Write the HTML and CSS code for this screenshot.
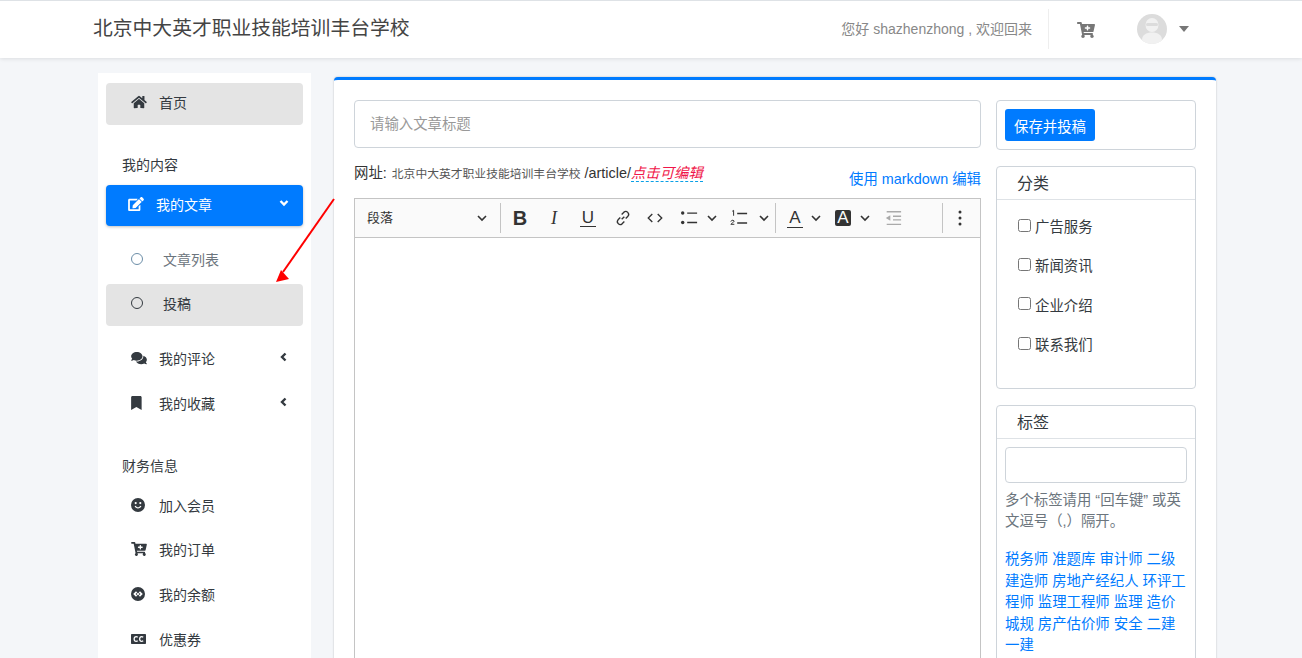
FILE: index.html
```html
<!DOCTYPE html>
<html lang="zh-CN">
<head>
    <meta charset="UTF-8">
    <meta name="viewport" content="width=device-width, initial-scale=1.0">
    <title>投稿</title>
    <link rel="stylesheet" href="styles.css">
</head>
<body>

    <header class="topbar">
        <h1 class="site-name">北京中大英才职业技能培训丰台学校</h1>
        <div class="topbar-right">
            <span class="welcome">您好 shazhenzhong , 欢迎回来</span>
            <span class="topbar-line"></span>
            <svg class="top-cart" viewBox="0 0 576 512"><path d="M504.717 320H211.572l6.545 32h268.418c15.401 0 26.816 14.301 23.403 29.319l-5.517 24.276C523.112 414.668 536 433.828 536 456c0 31.202-25.519 56.444-56.824 55.994-29.823-.429-54.35-24.631-55.155-54.447-.44-16.287 6.085-31.049 16.803-41.548H231.176C241.553 426.165 248 440.326 248 456c0 31.813-26.528 57.431-58.67 55.938-28.54-1.325-51.751-24.385-53.251-52.917-1.158-22.034 10.436-41.455 28.051-51.586L93.883 64H24C10.745 64 0 53.255 0 40V24C0 10.745 10.745 0 24 0h102.529c11.401 0 21.228 8.021 23.513 19.19L159.208 64H551.99c15.401 0 26.816 14.301 23.403 29.319l-47.273 208C525.637 312.246 515.923 320 504.717 320zM408 168h-48v-40c0-8.837-7.163-16-16-16h-16c-8.837 0-16 7.163-16 16v40h-48c-8.837 0-16 7.163-16 16v16c0 8.837 7.163 16 16 16h48v40c0 8.837 7.163 16 16 16h16c8.837 0 16-7.163 16-16v-40h48c8.837 0 16-7.163 16-16v-16c0-8.837-7.163-16-16-16z"/></svg>
            <svg class="avatar" viewBox="0 0 30 30">
                <circle cx="15" cy="15" r="15" fill="#dcdcdc"/>
                <ellipse cx="15" cy="11" rx="6.5" ry="7" fill="#f1f1f1"/>
                <rect x="9" y="9" width="12" height="3" rx="1.5" fill="#dcdcdc"/>
                <path d="M5 26c0-5 4-7.500 10-7.500s10 2.500 10 7.500c-2.500 2.500-6 4-10 4s-7.500-1.500-10-4z" fill="#f1f1f1"/>
            </svg>
            <span class="caret"></span>
        </div>
    </header>

    <div class="wrapper">
        <aside class="sidebar">
            <a class="nav-item hover">
                <svg class="nav-icon" viewBox="0 0 576 512"><path d="M280.37 148.26L96 300.11V464a16 16 0 0 0 16 16l112.06-.29a16 16 0 0 0 15.92-16V368a16 16 0 0 1 16-16h64a16 16 0 0 1 16 16v95.64a16 16 0 0 0 16 16.05L464 480a16 16 0 0 0 16-16V300L295.67 148.26a12.19 12.19 0 0 0-15.3 0zM571.6 251.47L488 182.56V44.05a12 12 0 0 0-12-12h-56a12 12 0 0 0-12 12v72.61L318.47 43a48 48 0 0 0-61 0L4.34 251.47a12 12 0 0 0-1.6 16.9l25.5 31A12 12 0 0 0 45.15 301l235.22-193.74a12.19 12.19 0 0 1 15.3 0L530.9 301a12 12 0 0 0 16.9-1.6l25.5-31a12 12 0 0 0-1.7-16.93z"/></svg>
                <span>首页</span>
            </a>

            <div class="nav-title">我的内容</div>
            <a class="nav-item active">
                <svg class="nav-icon" viewBox="0 0 576 512"><path d="M402.6 83.2l90.2 90.2c3.8 3.8 3.8 10 0 13.8L274.4 405.6l-92.8 10.3c-12.4 1.400-22.9-9.100-21.500-21.500l10.300-92.800L388.800 83.200c3.800-3.800 10-3.800 13.800 0zm162-22.900l-48.800-48.800c-15.200-15.200-39.900-15.200-55.200 0l-35.400 35.400c-3.800 3.800-3.800 10 0 13.800l90.200 90.200c3.800 3.800 10 3.800 13.800 0l35.400-35.400c15.200-15.300 15.200-40 0-55.200zM384 346.200V448H64V128h229.800c3.200 0 6.200-1.300 8.500-3.500l40-40c7.600-7.600 2.200-20.500-8.500-20.500H48C21.500 64 0 85.500 0 112v352c0 26.500 21.500 48 48 48h352c26.500 0 48-21.500 48-48V306.200c0-10.700-12.900-16-20.500-8.500l-40 40c-2.200 2.300-3.500 5.300-3.500 8.500z"/></svg>
                <span>我的文章</span>
                <svg class="chev" viewBox="0 0 10 10"><path d="M1.500 3l3.500 3.500L8.500 3"/></svg>
            </a>
            <div class="subnav">
                <a class="nav-item sub muted"><i class="ring"></i><span>文章列表</span></a>
                <a class="nav-item sub hover"><i class="ring"></i><span>投稿</span></a>
            </div>
            <a class="nav-item">
                <svg class="nav-icon" viewBox="0 0 576 512"><path d="M416 192c0-88.400-93.100-160-208-160S0 103.600 0 192c0 34.300 14.100 65.900 38 92-13.400 30.200-35.500 54.200-35.800 54.500-2.200 2.300-2.800 5.700-1.500 8.700S4.800 352 8 352c36.600 0 66.900-12.300 88.700-25 32.200 15.700 70.300 25 111.300 25 114.900 0 208-71.600 208-160zm122 220c23.900-26 38-57.700 38-92 0-66.900-53.500-124.200-129.300-148.100.9 6.600 1.300 13.300 1.300 20.100 0 105.900-107.700 192-240 192-10.800 0-21.300-.8-31.700-1.900C207.800 439.600 281.800 480 368 480c41 0 79.100-9.200 111.300-25 21.800 12.700 52.100 25 88.700 25 3.200 0 6.100-1.900 7.300-4.800 1.300-2.900.7-6.300-1.500-8.700-.3-.3-22.400-24.200-35.800-54.500z"/></svg>
                <span>我的评论</span>
                <svg class="chev" viewBox="0 0 10 10"><path d="M6.500 1.500L3 5l3.500 3.500"/></svg>
            </a>
            <a class="nav-item">
                <svg class="nav-icon" viewBox="0 0 576 512"><path d="M0 512V48C0 21.490 21.490 0 48 0h288c26.510 0 48 21.490 48 48v464L192 400 0 512z"/></svg>
                <span>我的收藏</span>
                <svg class="chev" viewBox="0 0 10 10"><path d="M6.500 1.500L3 5l3.500 3.500"/></svg>
            </a>

            <div class="nav-title money">财务信息</div>
            <a class="nav-item">
                <svg class="nav-icon" viewBox="1 1 16 14"><path fill-rule="evenodd" d="M8 1a7 7 0 1 1 0 14A7 7 0 0 1 8 1zM5.700 5a1.100 1.100 0 1 0 0 2.200 1.100 1.100 0 0 0 0-2.200zm4.600 0a1.100 1.100 0 1 0 0 2.200 1.100 1.100 0 0 0 0-2.200zM4.600 9.300c.7 1.300 2 2.100 3.400 2.100s2.700-.8 3.400-2.100l-1-.5c-.5.900-1.400 1.500-2.400 1.500s-1.900-.6-2.400-1.500z"/></svg>
                <span>加入会员</span>
            </a>
            <a class="nav-item">
                <svg class="nav-icon" viewBox="0 0 576 512"><path d="M504.717 320H211.572l6.545 32h268.418c15.401 0 26.816 14.301 23.403 29.319l-5.517 24.276C523.112 414.668 536 433.828 536 456c0 31.202-25.519 56.444-56.824 55.994-29.823-.429-54.350-24.631-55.155-54.447-.44-16.287 6.085-31.049 16.803-41.548H231.176C241.553 426.165 248 440.326 248 456c0 31.813-26.528 57.431-58.670 55.938-28.540-1.325-51.751-24.385-53.251-52.917-1.158-22.034 10.436-41.455 28.051-51.586L93.883 64H24C10.745 64 0 53.255 0 40V24C0 10.745 10.745 0 24 0h102.529c11.401 0 21.228 8.021 23.513 19.190L159.208 64H551.990c15.401 0 26.816 14.301 23.403 29.319l-47.273 208C525.637 312.246 515.923 320 504.717 320zM408 168h-48v-40c0-8.837-7.163-16-16-16h-16c-8.837 0-16 7.163-16 16v40h-48c-8.837 0-16 7.163-16 16v16c0 8.837 7.163 16 16 16h48v40c0 8.837 7.163 16 16 16h16c8.837 0 16-7.163 16-16v-40h48c8.837 0 16-7.163 16-16v-16c0-8.837-7.163-16-16-16z"/></svg>
                <span>我的订单</span>
            </a>
            <a class="nav-item">
                <svg class="nav-icon" viewBox="1 1 16 14"><path fill-rule="evenodd" d="M8 1a7 7 0 1 1 0 14A7 7 0 0 1 8 1zM3.200 8L6 10.800 7.200 9.600 5.600 8 7.200 6.400 6 5.200zm9.600 0L10 5.200 8.800 6.400 10.400 8 8.800 9.600 10 10.800zM8 6.600L6.600 8 8 9.400 9.400 8z"/></svg>
                <span>我的余额</span>
            </a>
            <a class="nav-item">
                <svg class="nav-icon" viewBox="0.5 1 16 14"><path fill-rule="evenodd" d="M1.500 3h13c.6 0 1 .4 1 1v8c0 .6-.4 1-1 1h-13c-.6 0-1-.4-1-1V4c0-.6.400-1 1-1zM6.800 6.700l.8-.9C7 5.200 6.300 5 5.600 5 4.100 5 3 6.200 3 8s1.100 3 2.600 3c.7 0 1.400-.3 2-.8l-.8-.9c-.3.3-.7.5-1.100.5-.8 0-1.400-.7-1.400-1.800s.6-1.800 1.400-1.800c.3 0 .7.200 1.100.5zm5.500 0l.8-.9c-.6-.6-1.300-.8-2-.8C9.600 5 8.500 6.200 8.500 8s1.100 3 2.600 3c.7 0 1.400-.3 2-.8l-.8-.9c-.3.3-.7.5-1.100.5-.8 0-1.400-.7-1.400-1.800s.6-1.800 1.400-1.800c.3 0 .7.200 1.100.5z"/></svg>
                <span>优惠券</span>
            </a>
        </aside>

        <main class="card">
            <div class="editor-col">
                <div class="title-input">请输入文章标题</div>
                <div class="url-row">
                    <div class="url">
                        <span class="url-label">网址:</span>
                        <span class="url-site">北京中大英才职业技能培训丰台学校</span>
                        <span>/article/</span><em class="url-edit">点击可编辑</em>
                    </div>
                    <a class="md-link">使用 markdown 编辑</a>
                </div>

                <div class="toolbar">
                    <div class="tb-format"><span>段落</span><svg class="tb-arrow" viewBox="0 0 10 10"><path d="M1 3l4 4 4-4"/></svg></div>
                    <i class="tb-sep"></i>
                    <span class="tb-btn tb-b">B</span>
                    <span class="tb-btn tb-i">I</span>
                    <span class="tb-btn tb-u">U</span>
                    <svg class="tb-icon tb-link" viewBox="0 0 20 20"><path d="M8.500 11.500l3-3M7 9.500l-2.500 2.500a3.200 3.200 0 0 0 4.500 4.500L11.500 14M8.500 6L11 3.500A3.200 3.200 0 0 1 15.500 8L13 10.500"/></svg>
                    <svg class="tb-icon" viewBox="0 0 20 20"><path d="M7 5.500L2.500 10 7 14.500M13 5.500l4.500 4.500-4.500 4.500"/></svg>
                    <svg class="tb-icon wide" viewBox="0 0 20 20"><circle class="solid" cx="3" cy="4.500" r="1.900"/><circle class="solid" cx="3" cy="15" r="1.900"/><path d="M8 4.500h11M8 15h11"/></svg>
                    <svg class="tb-arrow list" viewBox="0 0 10 10"><path d="M1 3l4 4 4-4"/></svg>
                    <svg class="tb-icon wide tb-num" viewBox="0 0 20 20"><path d="M8 5h11M8 15.500h11"/><path class="thin" d="M2.500 2.500l1.500-1v6M1 14c.3-2 3.500-2 3.500-.3 0 1-2.800 1.800-3.500 3.300h3.800"/></svg>
                    <svg class="tb-arrow end" viewBox="0 0 10 10"><path d="M1 3l4 4 4-4"/></svg>
                    <i class="tb-sep"></i>
                    <span class="tb-btn tb-color">A</span>
                    <svg class="tb-arrow" viewBox="0 0 10 10"><path d="M1 3l4 4 4-4"/></svg>
                    <span class="tb-btn tb-bg">A</span>
                    <svg class="tb-arrow" viewBox="0 0 10 10"><path d="M1 3l4 4 4-4"/></svg>
                    <svg class="tb-icon off" viewBox="0 0 20 20"><path d="M3 3h16M10 8h9M10 12h9M3 17h16"/><path class="solid" d="M7 7v6l-5-3z"/></svg>
                    <i class="tb-sep last"></i>
                    <svg class="tb-more" viewBox="0 0 4 16"><circle cx="2" cy="2" r="1.500"/><circle cx="2" cy="8" r="1.500"/><circle cx="2" cy="14" r="1.500"/></svg>
                </div>
                <div class="editor-body"></div>
            </div>

            <div class="side-col">
                <div class="panel save-panel"><button class="save-btn">保存并投稿</button></div>

                <div class="panel">
                    <div class="panel-head">分类</div>
                    <div class="cats">
                        <label class="cat"><input type="checkbox"><span>广告服务</span></label>
                        <label class="cat"><input type="checkbox"><span>新闻资讯</span></label>
                        <label class="cat"><input type="checkbox"><span>企业介绍</span></label>
                        <label class="cat"><input type="checkbox"><span>联系我们</span></label>
                    </div>
                </div>

                <div class="panel">
                    <div class="panel-head">标签</div>
                    <div class="tags-body">
                        <div class="tag-input"></div>
                        <p class="tag-help">多个标签请用 “回车键” 或英文逗号（,）隔开。</p>
                        <p class="tag-list">
                            <a>税务师</a> <a>准题库</a> <a>审计师</a> <a>二级建造师</a> <a>房地产经纪人</a> <a>环评工程师</a> <a>监理工程师</a> <a>监理</a> <a>造价</a> <a>城规</a> <a>房产估价师</a> <a>安全</a> <a>二建</a> <a>一建</a>
                        </p>
                    </div>
                </div>
            </div>
        </main>
    </div>

    <svg class="red-arrow" width="70" height="95" viewBox="0 0 70 95">
        <path d="M63 5L12 78" stroke="#f00" stroke-width="2" fill="none"/>
        <path d="M5 88l5-12 8 9z" fill="#f00"/>
    </svg>

</body>
</html>
```

FILE: styles.css
```css
* {
    margin: 0;
    padding: 0;
    box-sizing: border-box;
}

html, body {
    height: 100%;
    overflow: hidden;
}

body {
    position: relative;
    background-color: #f4f6f9;
    color: #343a40;
    font-family: "Liberation Sans", "Noto Sans CJK SC", sans-serif;
    font-size: 14px;
}

/* top bar */
.topbar {
    height: 58px;
    padding: 0 113px 1px 93px;
    display: flex;
    justify-content: space-between;
    align-items: center;
    background-color: #fff;
    border-top: 1px solid #dee2e6;
    box-shadow: 0 1px 4px rgba(0, 0, 0, 0.1);
}

.site-name {
    margin-bottom: 6px;
    font-size: 19.8px;
    font-weight: 400;
    color: #444;
}

.topbar-right {
    display: flex;
    align-items: center;
}

.welcome {
    margin-top: -2px;
    font-size: 14px;
    color: #888;
}

.topbar-line {
    width: 1px;
    height: 40px;
    margin: 0 28px 0 16px;
    background-color: #eee;
}

.top-cart {
    width: 18px;
    height: 16px;
    margin-top: 2px;
    fill: #777;
}

.avatar {
    width: 30px;
    height: 30px;
    margin-left: 42px;
}

.caret {
    margin-left: 12px;
    border-top: 6px solid #777;
    border-left: 5px solid transparent;
    border-right: 5px solid transparent;
}

/* page columns */
.wrapper {
    display: flex;
    align-items: flex-start;
    gap: 23px;
    padding: 15px 0 0 98px;
}

.sidebar {
    width: 213px;
    padding: 10px 8px 0;
    background-color: #fff;
}

.nav-item {
    height: 42px;
    margin-bottom: 3px;
    padding: 0 0 4px 25px;
    display: flex;
    align-items: center;
    gap: 12px;
    border-radius: 4px;
    color: #343a40;
}

.nav-item.hover {
    background-color: #e4e4e4;
}

.nav-item.active {
    height: 41px;
    margin-bottom: 4px;
    padding: 0 0 3px 22px;
    background-color: #007bff;
    color: #fff;
    box-shadow: 0 1px 3px rgba(0, 0, 0, 0.25);
}

.nav-icon {
    width: 16px;
    height: 14px;
    fill: currentColor;
    flex-shrink: 0;
}

.chev {
    width: 10px;
    height: 10px;
    margin: -2px 14px 0 auto;
    fill: none;
    stroke: currentColor;
    stroke-width: 2.4;
}

.nav-title {
    height: 57px;
    padding: 27px 16px 0;
    line-height: 21px;
}

.money + .nav-item {
    margin-bottom: 2px;
}

.subnav {
    margin: 13px 0 13px;
}

.nav-item.sub {
    gap: 20px;
}

.nav-item.muted {
    padding-bottom: 2px;
    color: #6c757d;
}

.ring {
    width: 12px;
    height: 12px;
    border: 1.5px solid #343a40;
    border-radius: 50%;
}

.muted .ring {
    border-color: #6c8ea8;
}

/* main card */
.card {
    width: 882px;
    height: 640px;
    margin-top: 4px;
    padding: 20px;
    display: flex;
    gap: 15px;
    background-color: #fff;
    border-top: 3px solid #007bff;
    border-radius: 4px;
    box-shadow: 0 0 2px rgba(0, 0, 0, 0.25);
    font-size: 14.4px;
}

.editor-col {
    width: 627px;
}

.title-input {
    height: 48px;
    padding: 0 15px;
    line-height: 46px;
    border: 1px solid #ced4da;
    border-radius: 4px;
    color: #999;
}

.url-row {
    height: 50px;
    padding-top: 15px;
    display: flex;
    justify-content: space-between;
}

.url {
    line-height: 21px;
    color: #333;
}

.url-label {
    margin-right: 1px;
}

.url-site {
    font-size: 11.8px;
    color: #555;
}

.url-edit {
    color: #f0164a;
    border-bottom: 1px dashed #0aa0e6;
}

.md-link {
    align-self: flex-end;
    margin-bottom: 10px;
    color: #007bff;
}

/* ckeditor-like toolbar */
.toolbar {
    height: 40px;
    padding-left: 12px;
    display: flex;
    align-items: center;
    background-color: #fafafa;
    border: 1px solid #c4c4c4;
    color: #333;
}

.tb-format {
    width: 122px;
    padding-right: 2px;
    display: flex;
    justify-content: space-between;
    align-items: center;
    font-size: 13px;
}

.tb-format span {
    margin-top: -4px;
}

.tb-sep {
    width: 1px;
    height: 30px;
    margin: 0 11px;
    background-color: #c4c4c4;
}

.tb-sep.last {
    margin: 0 15px 0 40px;
}

.tb-btn {
    width: 16px;
    margin-right: 18px;
    text-align: center;
    line-height: 20px;
}

.tb-b {
    font-size: 20px;
    font-weight: 700;
}

.tb-i {
    font-size: 18px;
    font-style: italic;
    font-family: "Liberation Serif", serif;
}

.tb-u {
    font-size: 17px;
    border-bottom: 1.5px solid #333;
    line-height: 17px;
}

.tb-icon {
    width: 18px;
    height: 18px;
    margin-right: 16px;
    fill: none;
    stroke: #333;
    stroke-width: 1.5;
    flex-shrink: 0;
}

.tb-link {
    margin-right: 14px;
}

.tb-icon.wide {
    margin-right: 9px;
}

.tb-icon.tb-num {
    margin-right: 11px;
}

.tb-icon .solid {
    fill: #333;
    stroke: none;
}

.tb-icon .thin {
    stroke-width: 1.1;
}

.tb-icon.off {
    margin: 0 0 0 4px;
    stroke: #aaa;
}

.tb-icon.off .solid {
    fill: #aaa;
}

.tb-arrow {
    width: 10px;
    height: 10px;
    margin-right: 10px;
    fill: none;
    stroke: #333;
    stroke-width: 1.6;
    flex-shrink: 0;
}

.tb-arrow.list {
    margin-right: 13px;
}

.tb-arrow.end {
    margin-right: -5px;
}

.tb-format .tb-arrow {
    margin-right: 0;
}

.tb-color,
.tb-bg {
    font-size: 17px;
    margin-right: 8px;
}

.tb-color {
    border-bottom: 1.5px solid #333;
    line-height: 19px;
}

.tb-bg {
    height: 16px;
    margin: 0 9px 0 4px;
    line-height: 16px;
    background-color: #333;
    color: #fafafa;
    border-radius: 2px;
}

.tb-more {
    width: 4px;
    height: 16px;
    fill: #333;
}

.editor-body {
    height: 430px;
    background-color: #fff;
    border: 1px solid #c4c4c4;
    border-top: 0;
}

/* right column */
.side-col {
    width: 200px;
}

.panel {
    margin-bottom: 16px;
    background-color: #fff;
    border: 1px solid #ced4da;
    border-radius: 4px;
}

.save-panel {
    height: 50px;
    padding: 8px;
}

.save-btn {
    width: 90px;
    height: 32px;
    background-color: #007bff;
    color: #fff;
    border: 0;
    border-radius: 3px;
    font: inherit;
}

.panel-head {
    height: 33px;
    padding-left: 20px;
    line-height: 34px;
    font-size: 16px;
    border-bottom: 1px solid #dee2e6;
}

.cats {
    height: 188px;
    padding: 6px 21px 0;
}

.cat {
    height: 39.3px;
    display: flex;
    align-items: center;
    gap: 4px;
}

.cat input {
    width: 13px;
    height: 13px;
    margin-top: -1px;
}

.tags-body {
    padding: 8px;
}

.tag-input {
    height: 36px;
    border: 1px solid #ced4da;
    border-radius: 4px;
}

.tag-help {
    margin-top: 7px;
    line-height: 21px;
    color: #6c757d;
}

.tag-list {
    margin-top: 17px;
    line-height: 21.5px;
}

.tag-list a {
    color: #007bff;
}

.red-arrow {
    position: absolute;
    left: 271px;
    top: 194px;
}
```
